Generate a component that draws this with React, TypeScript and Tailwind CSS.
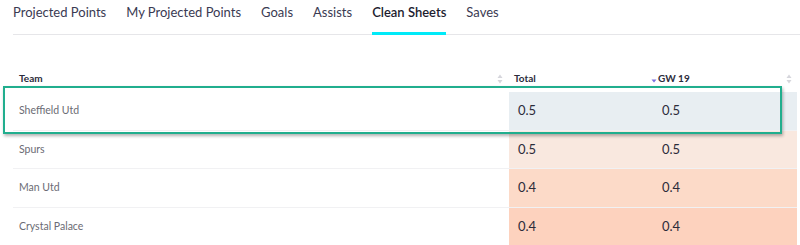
const tabs = ["Projected Points", "My Projected Points", "Goals", "Assists", "Clean Sheets", "Saves"];

const rows = [
  { team: "Sheffield Utd", total: "0.5", gw: "0.5", bg: "bg-[#e8eef2]" },
  { team: "Spurs", total: "0.5", gw: "0.5", bg: "bg-[#f9e8df]" },
  { team: "Man Utd", total: "0.4", gw: "0.4", bg: "bg-[#fcdac8]" },
  { team: "Crystal Palace", total: "0.4", gw: "0.4", bg: "bg-[#fdd2be]" },
];

const SortIcon = () => (
  <svg width="6" height="10" viewBox="0 0 6 10" className="shrink-0">
    <path d="M3 0.5 L5.5 4 L0.5 4 Z" fill="#d6d6dc" />
    <path d="M3 9.5 L5.5 6 L0.5 6 Z" fill="#d6d6dc" />
  </svg>
);

const SortDown = () => (
  <svg width="6" height="10" viewBox="0 0 6 10" className="shrink-0">
    <path d="M0.5 5.5 L5.5 5.5 L3 8.5 Z" fill="#7b6fe0" />
  </svg>
);

export default function App() {
  return (
    <div className="relative w-[800px] h-[245px] overflow-hidden bg-white font-['Lato',sans-serif]">
      <div className="ml-[13px] flex gap-[20px] border-b border-[#e6e6e9] h-[35px]">
        {tabs.map((t) => (
          <div
            key={t}
            className={
              t === "Clean Sheets"
                ? "h-[35px] pt-[3px] text-[13px] leading-[18px] font-semibold text-[#1d1d2f] border-b-[3px] border-[#00eaf8] -mb-px"
                : "h-[34px] pt-[3px] text-[13px] leading-[18px] text-[#3a3a52]"
            }
          >
            {t}
          </div>
        ))}
      </div>

      <div className="ml-[13px] mr-[3px] mt-[32px]">
        <div className="grid grid-cols-[496px_144px_1fr] h-[25px] pb-[2px] items-center text-[10px] font-bold text-[#2b2b3b]">
          <div className="flex items-center pl-[6px] pr-[6px] justify-between">
            <span>Team</span>
            <SortIcon />
          </div>
          <div className="flex items-center pl-[5px] justify-between">
            <span>Total</span>
            <span className="-mr-[4px] flex">
              <SortDown />
            </span>
          </div>
          <div className="flex items-center pl-[5px] pr-[5px] justify-between">
            <span>GW 19</span>
            <SortIcon />
          </div>
        </div>

        {rows.map((r) => (
          <div
            key={r.team}
            className="grid grid-cols-[496px_144px_1fr] h-[38.5px] border-b border-[#f1f1f3]"
          >
            <div className="flex items-center pl-[6px] pt-[1px] text-[10.5px] text-[#6b6b74]">{r.team}</div>
            <div className={`flex items-center pl-[9px] text-[13px] text-[#2c2c3a] ${r.bg}`}>{r.total}</div>
            <div className={`flex items-center pl-[9px] text-[13px] text-[#2c2c3a] ${r.bg}`}>{r.gw}</div>
          </div>
        ))}
      </div>

      <div className="absolute left-[3px] top-[86px] w-[779px] h-[48px] border-2 border-[#21ae8e] shadow-[1px_2px_3px_rgba(0,0,0,0.3)]" />
    </div>
  );
}
